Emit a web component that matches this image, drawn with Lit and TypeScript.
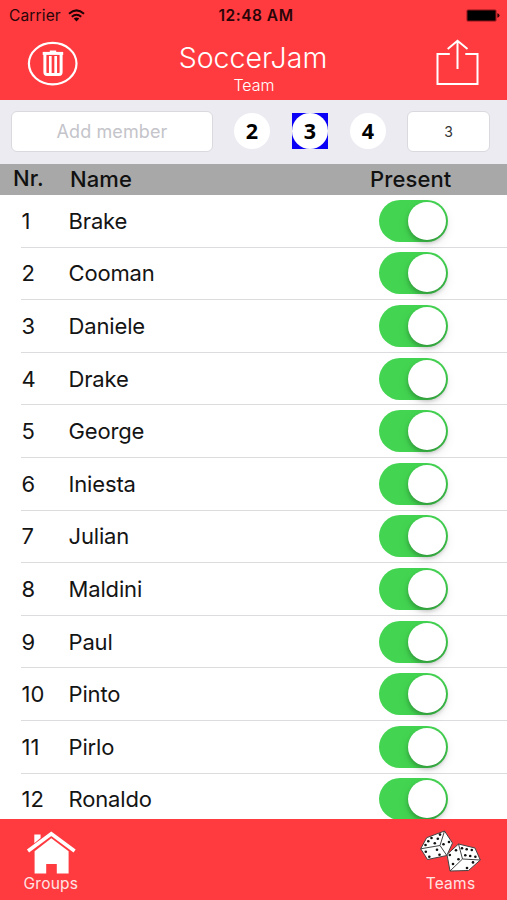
import { LitElement, html, css, svg } from "lit";
import { customElement, property } from "lit/decorators.js";

const members = [
  "Brake", "Cooman", "Daniele", "Drake", "George", "Iniesta",
  "Julian", "Maldini", "Paul", "Pinto", "Pirlo", "Ronaldo",
];

@customElement("team-switch")
class TeamSwitch extends LitElement {
  static styles = css`
    :host { display: block; }
    .track {
      box-sizing: border-box;
      width: 69px;
      height: 42px;
      padding: 2px;
      border-radius: 21px;
      background: #43d551;
      display: flex;
      justify-content: flex-end;
    }
    .knob {
      width: 38px;
      height: 38px;
      border-radius: 50%;
      background: #fff;
      box-shadow: 0 3px 4px rgba(0, 0, 0, 0.22), 0 4px 12px rgba(0, 0, 0, 0.1);
    }
  `;
  render() {
    return html`<div class="track"><div class="knob"></div></div>`;
  }
}

@customElement("member-row")
class MemberRow extends LitElement {
  @property({ type: Number }) nr = 0;
  @property() name = "";
  static styles = css`
    :host { display: block; height: 52.6px; padding-left: 21px; flex: none; }
    .row {
      box-sizing: border-box;
      height: 100%;
      display: grid;
      grid-template-columns: 47px 310.7px auto;
      align-items: center;
      border-bottom: 1.5px solid #dcdcde;
      font-size: 22px;
      color: #141414;
    }
    .nr { padding-left: 0.6px; }
    .name { padding-left: 0.5px; letter-spacing: -0.15px; }
  `;
  render() {
    return html`<div class="row">
      <span class="nr">${this.nr}</span>
      <span class="name">${this.name}</span>
      <team-switch></team-switch>
    </div>`;
  }
}

const pips = (points: number[][]) =>
  points.map(([x, y]) => svg`<circle cx=${x} cy=${y} r="1.3" fill="#111"/>`);

@customElement("app-root")
class AppRoot extends LitElement {
  static styles = css`
    :host {
      display: flex;
      flex-direction: column;
      width: 507px;
      height: 900px;
      overflow: hidden;
      background: #fff;
      font-family: Inter, "Liberation Sans", sans-serif;
    }
    svg { display: block; }
    .top { height: 100px; background: #ff3b40; flex: none; }
    .status {
      height: 30px;
      display: grid;
      grid-template-columns: 1fr auto 1fr;
      align-items: center;
      box-sizing: border-box;
      padding: 0 7px 0 9px;
      font-size: 15.5px;
      color: #2a0508;
    }
    .carrier { display: flex; align-items: center; gap: 7px; letter-spacing: 0.15px; }
    .time { font-weight: 600; letter-spacing: 0.5px; padding-left: 3px; }
    .battery { justify-self: end; }
    .nav {
      height: 70px;
      display: grid;
      grid-template-columns: 1fr auto 1fr;
      padding: 0 28px 0 27px;
      color: #fff;
    }
    .trash { padding-top: 11px; }
    .share { padding-top: 9px; justify-self: end; }
    .titles { text-align: center; padding-top: 10px; }
    .title { font-size: 28.5px; line-height: 36px; font-weight: 300; }
    .subtitle { font-size: 16px; line-height: 18px; font-weight: 300; padding-left: 2px; }
    .tools {
      height: 64px;
      flex: none;
      box-sizing: border-box;
      background: #ebebf1;
      display: flex;
      padding: 11px 0 0 11px;
    }
    .field {
      box-sizing: border-box;
      height: 41px;
      border: 1px solid #d9d9de;
      border-radius: 6px;
      background: #fff;
      display: flex;
      align-items: center;
      justify-content: center;
    }
    .add { width: 202px; font-size: 18px; color: #c4c4ca; letter-spacing: 0.1px; }
    .count { width: 83px; font-size: 14px; color: #333; }
    .sizes { display: flex; gap: 22px; padding: 2px 21px 0 21px; }
    .size { width: 36px; height: 36px; }
    .size.on { background: #0a00f5; }
    .disc {
      height: 36px;
      border-radius: 50%;
      background: #fff;
      text-align: center;
      font: 700 21.5px/35px "Open Sans", "Noto Sans", sans-serif;
      color: #000;
    }
    .heads {
      height: 31px;
      flex: none;
      box-sizing: border-box;
      background: #a8a8a8;
      display: grid;
      grid-template-columns: 57px 300px auto;
      padding-left: 13px;
      font-size: 22px;
      line-height: 31px;
      font-weight: 550;
      letter-spacing: 0.1px;
      color: #111;
    }
    .nr { line-height: 29px; }
    .list { flex: 1; min-height: 0; overflow: hidden; display: flex; flex-direction: column; }
    .tabs {
      height: 81px;
      flex: none;
      background: #ff3b40;
      display: flex;
      justify-content: space-between;
      box-sizing: border-box;
      padding: 11px 26px 0 23.5px;
      color: #ffe3e3;
      font-size: 15.5px;
      line-height: 20px;
    }
    .tab { display: flex; flex-direction: column; align-items: center; }
    .label { letter-spacing: 0.25px; }
  `;

  render() {
    return html`
      <div class="top">
        <div class="status">
          <div class="carrier">
            <span>Carrier</span>
            <svg width="17" height="13" viewBox="0 0 17 13" fill="none" stroke="#1c0204" stroke-width="2">
              <path d="M1 4.8Q8.5-2 16 4.8M3.8 7.8Q8.5 3.6 13.2 7.8"/>
              <path d="M5.7 9.6Q8.5 7.3 11.3 9.6L8.5 12.4Z" fill="#1c0204" stroke="none"/>
            </svg>
          </div>
          <span class="time">12:48 AM</span>
          <svg class="battery" width="34" height="13" viewBox="0 0 34 13">
            <rect x=".5" y=".5" width="30" height="12" rx="1.5" fill="#8c1418"/>
            <rect x="1.6" y="1.5" width="27.8" height="10" rx=".8" fill="#000"/>
            <path d="M31.3 4.3Q33.6 4.8 33.6 6.5T31.3 8.7Z" fill="#3a0507"/>
          </svg>
        </div>
        <div class="nav">
          <svg class="trash" width="51" height="45" viewBox="0 0 51 45" fill="none" stroke="#fff">
            <ellipse cx="25.7" cy="22.6" rx="23.8" ry="20.7" stroke-width="2.2"/>
            <path d="M15.7 12.4H36.2" stroke-width="3"/>
            <path d="M22.8 10.6H29.2" stroke-width="2.2"/>
            <path d="M17.9 13V31.2Q17.9 33.4 20 33.4H32Q34.1 33.4 34.1 31.2V13" stroke-width="3"/>
            <path d="M23.3 15V33M28.7 15V33" stroke-width="2.7"/>
          </svg>
          <div class="titles">
            <div class="title">SoccerJam</div>
            <div class="subtitle">Team</div>
          </div>
          <svg class="share" width="43" height="47" viewBox="0 0 43 47" fill="none" stroke="#fff" stroke-width="2">
            <path d="M13.8 15H1.5V45H41.5V15H29.3M21.5 30V2M11.7 10L21.5 1.8L31.5 10"/>
          </svg>
        </div>
      </div>
      <div class="tools">
        <div class="field add">Add member</div>
        <div class="sizes">
          ${[2, 3, 4].map((n) => html`<div class="size ${n === 3 ? "on" : ""}"><div class="disc">${n}</div></div>`)}
        </div>
        <div class="field count">3</div>
      </div>
      <div class="heads"><span class="nr">Nr.</span><span>Name</span><span>Present</span></div>
      <div class="list">
        ${members.map((m, i) => html`<member-row .nr=${i + 1} .name=${m}></member-row>`)}
      </div>
      <div class="tabs">
        <div class="tab">
          <svg width="50" height="44" viewBox="0 0 50 44" fill="#fff">
            <path d="M8.3 4.5H14.6V8L8.3 13.2Z"/>
            <path d="M2 21L25.3 3.8L48.6 21" fill="none" stroke="#fff" stroke-width="3.6"/>
            <path d="M25.3 8.2L42.6 21.2V43.4H30.8V34H20.2V43.4H8.6V21.2Z"/>
          </svg>
          <span class="label">Groups</span>
        </div>
        <div class="tab">
          <svg width="61" height="44" viewBox="0 0 61 44">
            <g fill="#fff" stroke="#444" stroke-width="1" stroke-linejoin="round">
              <path d="M.7 18.8L6.7 7.7L24.5 1L32.5 13L26.8 25.5L7.5 29.5Z"/>
              <path d="M.7 18.8L20 15.5L24.5 1M20 15.5L26.8 25.5" fill="none"/>
              <path d="M27 24.5L38.5 14L55 18L60.3 30L48.5 40.5L30 41Z"/>
              <path d="M38.5 14L42.5 29L60.3 30M42.5 29L30 41" fill="none"/>
            </g>
            ${pips([
              [5.5, 15], [8.3, 11.3], [11.5, 8], [14.8, 13.2], [17.8, 8.8], [20, 4.6],
              [5.8, 21.8], [17, 19.7], [19.5, 24.7], [9.3, 26.8], [23.5, 14.3], [29, 12],
              [29.8, 25], [36, 20.3], [33, 34], [38.5, 29.2],
              [42, 18.3], [46.7, 19.2], [51.8, 20], [45.3, 25.3], [50.2, 26], [55.4, 26.7],
              [53, 32.4], [47, 38],
            ])}
          </svg>
          <span class="label">Teams</span>
        </div>
      </div>
    `;
  }
}
